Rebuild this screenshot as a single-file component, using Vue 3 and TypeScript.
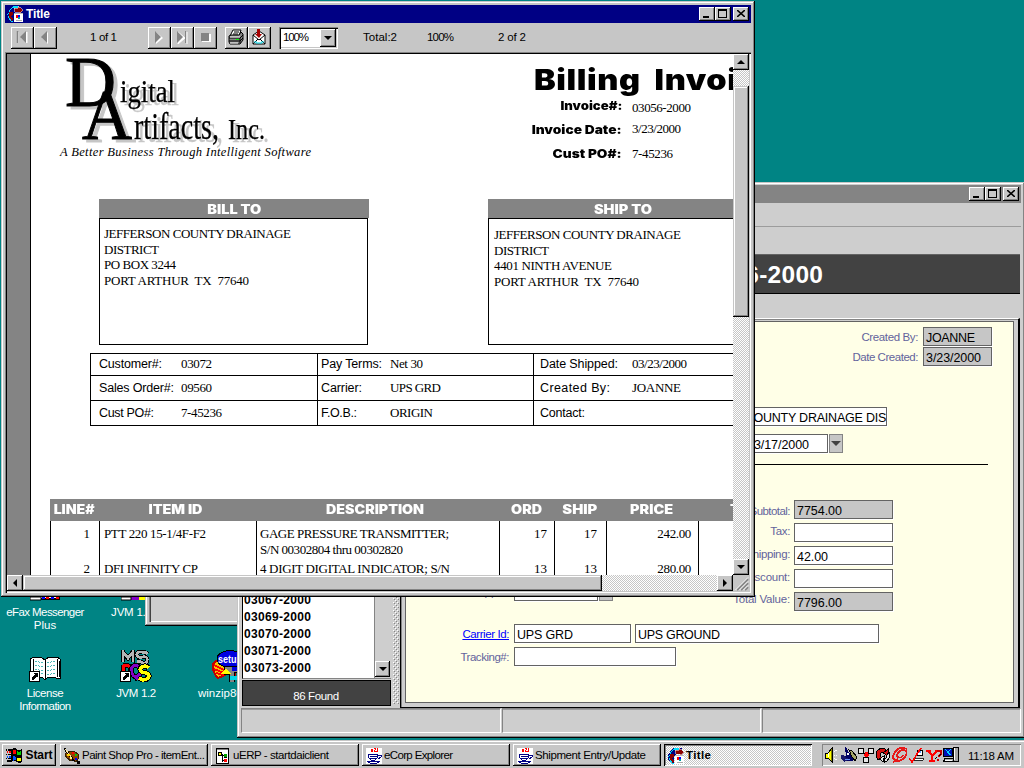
<script setup lang="ts">
import type { Directive } from 'vue'

interface Field { text: string; width: number }
interface InfoCell { label: Field; value: Field }
interface ItemRow { line: string; item: Field; description: Field[]; ordered: string; shipped: string; price: string }
interface Total { label: Field; value: string; width: number; readonly: boolean }
interface Task { icon: string; text: Field; active: boolean }

// Makes a line of text span the given width, by tracking or (with .wide) by widening its glyphs.
const vFit: Directive<HTMLElement, number> = {
  mounted(el, binding) {
    const length = (el.textContent ?? '').length
    if (!binding.value || length < 2) return
    const natural = el.getBoundingClientRect().width
    if (binding.modifiers.wide) el.style.transform = `scaleX(${binding.value / natural})`
    else el.style.letterSpacing = `${(binding.value - natural) / (length - 1)}px`
  },
}

const f = (text: string, width: number): Field => ({ text, width })

const invoiceMeta: InfoCell[] = [
  { label: f('Invoice#:', 62), value: f('03056-2000', 59) },
  { label: f('Invoice Date:', 90), value: f('3/23/2000', 49) },
  { label: f('Cust PO#:', 69), value: f('7-45236', 41) },
]

const parties = [
  {
    key: 'bill', title: f('BILL TO', 54),
    lines: [f('JEFFERSON COUNTY DRAINAGE', 187), f('DISTRICT', 55), f('PO BOX 3244', 72), f('PORT ARTHUR  TX  77640', 145)],
  },
  {
    key: 'ship', title: f('SHIP TO', 58),
    lines: [f('JEFFERSON COUNTY DRAINAGE', 187), f('DISTRICT', 55), f('4401 NINTH AVENUE', 118), f('PORT ARTHUR  TX  77640', 145)],
  },
]

const info: InfoCell[][] = [
  [
    { label: f('Customer#:', 63), value: f('03072', 31) },
    { label: f('Pay Terms:', 61), value: f('Net 30', 33) },
    { label: f('Date Shipped:', 78), value: f('03/23/2000', 55) },
  ],
  [
    { label: f('Sales Order#:', 75), value: f('09560', 31) },
    { label: f('Carrier:', 41), value: f('UPS GRD', 51) },
    { label: f('Created By:', 70), value: f('JOANNE', 49) },
  ],
  [
    { label: f('Cust PO#:', 55), value: f('7-45236', 41) },
    { label: f('F.O.B.:', 36), value: f('ORIGIN', 43) },
    { label: f('Contact:', 45), value: f('', 0) },
  ],
]

const itemHeads: Field[] = [
  f('LINE#', 41), f('ITEM ID', 54), f('DESCRIPTION', 98), f('ORD', 31), f('SHIP', 35), f('PRICE', 43), f('TOTAL', 48),
]

const items: ItemRow[] = [
  {
    line: '1', item: f('PTT 220 15-1/4F-F2', 102),
    description: [f('GAGE PRESSURE TRANSMITTER;', 189), f('S/N 00302804 thru 00302820', 143)],
    ordered: '17', shipped: '17', price: '242.00',
  },
  {
    line: '2', item: f('DFI INFINITY CP', 94),
    description: [f('4 DIGIT DIGITAL INDICATOR; S/N', 190)],
    ordered: '13', shipped: '13', price: '280.00',
  },
]

const shipments = ['03067-2000', '03069-2000', '03070-2000', '03071-2000', '03073-2000']

const totals: Total[] = [
  { label: f('Subtotal:', 41), value: '7754.00', width: 45, readonly: true },
  { label: f('Tax:', 20), value: '', width: 0, readonly: false },
  { label: f('Shipping:', 45), value: '42.00', width: 31, readonly: false },
  { label: f('Discount:', 46), value: '', width: 0, readonly: false },
  { label: f('Total Value:', 57), value: '7796.00', width: 45, readonly: true },
]

const tasks: Task[] = [
  { icon: 'palette', text: f('Paint Shop Pro - itemEnt...', 123), active: false },
  { icon: 'script', text: f('uERP - startdaiclient', 96), active: false },
  { icon: 'java', text: f('eCorp Explorer', 69), active: false },
  { icon: 'java', text: f('Shipment Entry/Update', 111), active: false },
  { icon: 'report', text: f('Title', 25), active: true },
]

const tray = ['speaker', 'wizard', 'nodes', 'cycle', 'swirl', 'check', 'yahoo', 'monitor']
</script>

<template>
  <div class="desktop">
    <svg class="defs" aria-hidden="true">
      <symbol id="report" viewBox="0 0 16 16">
        <path d="M5 0h9v6H8L6 8v8H4L0 11V7z" fill="#000084" />
        <path d="M0 9l2-2 1-3 3-3h5" fill="none" stroke="#00e0ff" stroke-width="1.200" />
        <path d="M7 2h4V0l5 4-4 4V6H8z" fill="#8c0000" stroke="#fff" stroke-width=".5" />
        <path d="M2 6h4v3L4 10l2 3-1 2-3-2z" fill="#8c0000" />
        <path d="M1 10l3 5h2" fill="none" stroke="#00e0ff" />
        <path d="M7 7h9v9H7z" fill="#fff" /><path d="M7 7h9" stroke="#bbb" />
        <path d="M9 9h2v3H9z" fill="#f00" /><path d="M11 9h2v2h-2z" fill="#00f" /><path d="M11 11h2v2h-2z" fill="#00a0a0" />
        <path d="M8.500 14.500h6" stroke="#aaa" />
      </symbol>
      <symbol id="palette" viewBox="0 0 16 16">
        <path d="M2 5l3-2 5 0 4 3 1 4-3 4-3-2-2 1-4-3-2-3z" fill="#944200" stroke="#312000" />
        <path d="M0 0l10 13" stroke="#000" stroke-width="2" /><path d="M1 1l7 9" stroke="#ffe7a5" />
        <path d="M3 6h3v2H3z" fill="#ffd600" /><path d="M8 4h2v2H8z" fill="#f00" /><path d="M11 6h2v2h-2z" fill="#0c0" /><path d="M11 10h2v2h-2z" fill="#00f" />
        <path d="M6 9h2v2H6z" fill="#ff8" /><path d="M13 13h2v1h-2v1h2v1h-3" fill="none" stroke="#000" />
      </symbol>
      <symbol id="script" viewBox="0 0 16 16">
        <path d="M1.500.500h12v15h-12z" fill="#fff" stroke="#000" /><path d="M2 1h11v1H2z" fill="#848484" />
        <path d="M3 4h4v4H3z" fill="#000" /><path d="M4 5h2v2H4z" fill="#ff0" /><path d="M7 6h1v8H7z" fill="#000" />
        <path d="M9 6h3v3H9z" fill="#00a000" /><path d="M9 11h3v3H9z" fill="#f00" /><path d="M7 7h2v1H7zM7 12h2v1H7zM9 9h3v1H9z" fill="#000" />
      </symbol>
      <symbol id="java" viewBox="0 0 16 16">
        <path d="M0 0h16v16H0z" fill="#fff" />
        <path d="M5 1l2 1-2 1 2 1M8 0l2 1-2 2 2 1M12 0l-1 2 1 1-2 1" fill="none" stroke="#f00" stroke-width="1.200" />
        <path d="M2 6h10l-1 4-2 2H5L3 10z" fill="#fff" stroke="#000084" />
        <path d="M12 7h3v2l-3 2M4 8h7M4 10h6" fill="none" stroke="#000084" />
        <path d="M1 13l3 2h7l3-2M3 13h9" fill="none" stroke="#000084" />
      </symbol>
      <symbol id="flag" viewBox="0 0 16 16">
        <path d="M5 2q3-2 5 0t5 0v12q-3 2-5 0t-5 0z" fill="#000" />
        <path d="M6.500 3q2-1 3 .5V7q-1-1-3 0z" fill="#f00" /><path d="M10.500 4q1 .8 3.500 0v3.500q-2 1-3.500 0z" fill="#00d000" />
        <path d="M6.500 9q2-1 3 .5V13q-1-1-3 0z" fill="#0050ff" /><path d="M10.500 10q1 .8 3.500 0v3q-2 1-3.500 0z" fill="#ff0" />
        <path d="M0 3h1M2 3h3M0 7h1M2 7h3M0 11h1M2 11h3M1 13h4" stroke="#000" stroke-width="1.500" />
        <path d="M1 5h1M3 5h2" stroke="#f00" stroke-width="2" /><path d="M1 9h1M3 9h2" stroke="#0050ff" stroke-width="2" />
      </symbol>
      <symbol id="speaker" viewBox="0 0 16 16">
        <path d="M1 6h3l4-5v14l-4-4H1z" fill="#ff0" stroke="#000" /><path d="M7 2v12" stroke="#848400" />
        <path d="M4 6v4" stroke="#fff" /><path d="M10 5l3-2M10 8h4M10 11l3 2" stroke="#fff" stroke-dasharray="1 1" />
      </symbol>
      <symbol id="wizard" viewBox="0 0 16 16">
        <path d="M4 0l2 2 4 7 2 2v3H2v-3l3-2z" fill="#000063" /><path d="M0 8h3l2 3 4 1-6 3-3-3z" fill="#18186b" />
        <path d="M8 3l3 1 5 6-2 4-3-4z" fill="#a5a56b" stroke="#000" /><path d="M6 6h2v2H6z" fill="#fff" /><path d="M4 12h5v1H4z" fill="#6b94ff" />
      </symbol>
      <symbol id="nodes" viewBox="0 0 16 16">
        <path d="M.5 1.500h5v5h-5zM10.500 1.500h5v5h-5zM5.500 10.500h5v5h-5z" fill="#e7e7e7" stroke="#000" />
        <path d="M5 5l3 3 3-3M8 8v3" stroke="#000" fill="none" /><path d="M7 5h3v2h1v2h-1v1H7V9H6V7h1z" fill="#f00" />
      </symbol>
      <symbol id="cycle" viewBox="0 0 16 16">
        <path d="M3 13L1 9l1-5 4-3h3l2 2-1 3-3-1-2 2v2l2 2z" fill="#d61010" stroke="#000" />
        <path d="M8 6l5 3V2z" fill="#d61010" stroke="#000" />
        <path d="M14 5l1 5-3 4-4 1v-3l3-1 1-3zM9 9v6l-5-3z" fill="#e7e7e7" stroke="#000" />
      </symbol>
      <symbol id="swirl" viewBox="0 0 16 16">
        <path d="M15 2Q7-1 3 5t-1 7q4 4 9 0t3-8q-3-3-7 1T6 10q3 2 5-2" fill="none" stroke="#e71818" stroke-width="1.800" />
        <path d="M1 15l5-3" stroke="#e71818" stroke-width="2" />
      </symbol>
      <symbol id="check" viewBox="0 0 16 16">
        <path d="M8 3h5v5H8z" fill="#fff" stroke="#000" /><path d="M9 4h3v2H9z" fill="#5aa5ff" /><path d="M5 11h9v2H5z" fill="#fff" stroke="#000" stroke-width=".8" />
        <path d="M0 11l3 4L12 1" fill="none" stroke="#f00" stroke-width="1.600" />
      </symbol>
      <symbol id="yahoo" viewBox="0 0 16 16">
        <path d="M0 3h5v1L6 7l3-3V3h3v1L7 9v4h2v2H3v-2h2V9L1 5H0z" fill="#f00" /><path d="M11 4h4v3l-3 3M11 13h2" fill="none" stroke="#c00" stroke-width="1.600" />
        <path d="M9 12l2-2M13 9l2-2" stroke="#000" />
      </symbol>
      <symbol id="monitor" viewBox="0 0 16 16">
        <path d="M.5 1.500h9v8h-9zM10.500.500h5v14h-5zM2 11.500h8v3H.500z" fill="#a5a5a5" stroke="#000" /><path d="M1 2h8v7H1z" fill="#0010b5" />
        <path d="M2 2l3 3 3-3M4 5l4 3" fill="none" stroke="#00d6ff" /><path d="M11.500 1v12" stroke="#fff" /><path d="M2 13h7" stroke="#fff" />
      </symbol>
      <symbol id="msdos" viewBox="0 0 32 32">
        <g fill="none" stroke-linejoin="miter">
          <path d="M3 12V2l5 6 5-6v10M28 4q-2-2-7-2t-4 3 6 2 4 4-6 1l-4-1" stroke="#000" stroke-width="4.500" />
          <path d="M3 12V2l5 6 5-6v10M28 4q-2-2-7-2t-4 3 6 2 4 4-6 1l-4-1" stroke="#b5b5b5" stroke-width="2.800" />
          <path d="M3 15v14h3q5-1 4-12-2-2-7-2" stroke="#000" stroke-width="5" /><path d="M3 15v14h3q5-1 4-12-2-2-7-2" stroke="#f00" stroke-width="3" />
          <path d="M15 15q-5 2-3 8t7 2-1-9zM15 25l3 5" stroke="#000" stroke-width="5" /><path d="M15 15q-5 2-3 8t7 2-1-9zM15 25l3 5" stroke="#8400c6" stroke-width="3" />
          <path d="M29 18q-3-3-7-1t0 5q7 1 7 4t-6 4l-4-2" stroke="#000" stroke-width="5.500" /><path d="M29 18q-3-3-7-1t0 5q7 1 7 4t-6 4l-4-2" stroke="#ff0" stroke-width="3.500" />
        </g>
      </symbol>
      <symbol id="shortcut" viewBox="0 0 11 11">
        <path d="M.5.500h10v10H.500z" fill="#fff" stroke="#000" /><path d="M4 2h5v5L7.500 5.500 5 8v1H3V7l2.500-3.500z" fill="#000" />
      </symbol>
      <symbol id="book" viewBox="0 0 32 26">
        <path d="M1 3l4-2h7l4 3 4-3h8l3 2v19h-4l-8-1-3 3-3-3-9 1H1z" fill="#fff" stroke="#000" />
        <path d="M4 3v17M16 4v19M28 3v18M30 5v16" stroke="#000" />
        <path d="M6 5l8 2M6 9l8 2M6 13l8 2M6 17l8 1M18 7l8-2M18 11l8-2M18 15l8-2M18 19l8-2" stroke="#4ab5b5" stroke-dasharray="2 1" />
      </symbol>
      <symbol id="setup" viewBox="0 0 32 32">
        <path d="M1 14q4-6 13-2l9 6v7l-8-1-9 4q-6-6-5-14z" fill="#f7c600" stroke="#c00000" stroke-width="2" />
        <path d="M2 15l10 5M2 19l10 4M4 23l8 2" stroke="#f00" stroke-width="2" />
        <ellipse cx="18" cy="9" rx="13" ry="8.500" fill="#0000e0" stroke="#000" />
        <path d="M12 16h18v6H22v10h-5v-8h-5z" fill="#848484" stroke="#000" /><path d="M14 18l5 6H9z" fill="#ff0" /><path d="M20 17h10v4H20z" fill="#0000e0" />
        <path d="M18 26h8v4h-8z" fill="#00d6e7" />
        <text x="6" y="13" textLength="24" lengthAdjust="spacingAndGlyphs" class="setup-text">setup</text>
      </symbol>
    </svg>

    <div class="shortcuts">
      <div class="shortcut">
        <div class="art short"><svg width="30" height="5"><path d="M10 0h20v3H10z" fill="#000" /><path d="M11 0h18v1H11z" fill="#fff" /><path d="M12 0h3v2h-3zM21 0h3v2h-3z" fill="#00f" /><path d="M16 0h3v2h-3zM26 0h3v2h-3z" fill="#f00" /><path d="M0 0h11v3H0z" fill="#fff" stroke="#000" /></svg></div>
        <span v-fit="78">eFax Messenger</span><span>Plus</span>
      </div>
      <div class="shortcut">
        <div class="art short"><svg width="31" height="5"><path d="M10 0h8v3h-8z" fill="#8400c6" /><path d="M18 0h12v3H18z" fill="#ff0" /><path d="M0 0h10v3H0z" fill="#fff" stroke="#000" /></svg></div>
        <span v-fit="50">JVM 1.1.8</span>
      </div>
      <div></div>
      <div class="shortcut">
        <div class="art"><svg width="32" height="26"><use href="#book" /></svg><svg class="arrow" width="11" height="11"><use href="#shortcut" /></svg></div>
        <span v-fit="37">License</span><span v-fit="52">Information</span>
      </div>
      <div class="shortcut">
        <div class="art"><svg width="32" height="32"><use href="#msdos" /></svg><svg class="arrow" width="11" height="11"><use href="#shortcut" /></svg></div>
        <span v-fit="40">JVM 1.2</span>
      </div>
      <div class="shortcut">
        <div class="art"><svg width="32" height="32"><use href="#setup" /></svg></div>
        <span v-fit="60">winzip80.ex</span>
      </div>
    </div>

    <div class="window stub"><div class="stub-face"></div></div>

    <section class="window entry">
      <div class="titlebar idle">
        <div class="controls">
          <button class="ctl"><i class="min"></i></button><button class="ctl"><i class="max"></i></button>
          <button class="ctl close"><svg width="8" height="7"><path d="M0 0l8 7M8 0L0 7" stroke="#000" stroke-width="1.600" /></svg></button>
        </div>
      </div>
      <div class="menubar"></div>
      <div class="toolstrip"></div>
      <div class="banner"><span v-fit="263">Shipment: 03056-2000</span></div>
      <div class="body">
        <aside class="side">
          <div class="list">
            <ul><li v-for="s in shipments" :key="s"><span v-fit="67">{{ s }}</span></li></ul>
            <div class="list-bar"><button class="bevel sq"><i class="tri down"></i></button></div>
          </div>
          <div class="found"><span v-fit="46">86 Found</span></div>
        </aside>
        <div class="splitter">
          <svg width="7" height="410">
            <pattern id="bumps" width="4" height="4" patternUnits="userSpaceOnUse">
              <path d="M0 0h1v1H0zM2 2h1v1H2z" fill="#fff" /><path d="M1 1h1v1H1zM3 3h1v1H3z" fill="#848484" />
            </pattern>
            <rect width="7" height="410" fill="url(#bumps)" />
          </svg>
        </div>
        <div class="form-frame">
          <div class="form">
            <div class="row end"><label v-fit="57">Created By:</label><div class="input ro w69"><span v-fit="49">JOANNE</span></div></div>
            <div class="row end second"><label v-fit="66">Date Created:</label><div class="input ro w69"><span v-fit="55">3/23/2000</span></div></div>
            <div class="row customer"><div class="input"><span v-fit="253">JEFFERSON COUNTY DRAINAGE DISTRICT</span></div></div>
            <div class="row ordered"><div class="input"><span v-fit="62">03/17/2000</span></div><div class="drop"><i></i></div></div>
            <hr />
            <div class="amounts">
              <div class="row shipped"><label>Shipped:</label><div class="input bold"><span v-fit="68">03/23/2000</span></div><div class="drop"><i></i></div></div>
              <div class="totals">
                <div v-for="t in totals" :key="t.label.text" class="row">
                  <label v-fit="t.label.width">{{ t.label.text }}</label>
                  <div class="input" :class="{ ro: t.readonly }"><span v-fit="t.width">{{ t.value }}</span></div>
                </div>
              </div>
            </div>
            <div class="row carrier"><label class="link"><span v-fit="47">Carrier Id:</span></label><div class="input w117"><span v-fit="56">UPS GRD</span></div><div class="input w244"><span v-fit="82">UPS GROUND</span></div></div>
            <div class="row tracking"><label><span v-fit="49">Tracking#:</span></label><div class="input w162"></div></div>
          </div>
        </div>
      </div>
      <div class="status"><div></div><div></div><div></div></div>
    </section>

    <section class="window report">
      <div class="titlebar">
        <svg class="ticon" width="16" height="16"><use href="#report" /></svg><b v-fit="24">Title</b>
        <div class="controls">
          <button class="ctl"><i class="min"></i></button><button class="ctl"><i class="max"></i></button>
          <button class="ctl close"><svg width="8" height="7"><path d="M0 0l8 7M8 0L0 7" stroke="#000" stroke-width="1.600" /></svg></button>
        </div>
      </div>
      <div class="toolbar">
        <button class="bevel tb"><svg width="12" height="14"><path d="M2 2v11M11 2v11L5 7.500z" fill="#fff" stroke="#fff" /><path d="M1.500 1v12" stroke="#848484" stroke-width="1.500" /><path d="M10 1v12L4 7z" fill="#848484" /></svg></button>
        <button class="bevel tb"><svg width="12" height="14"><path d="M9 2v12L3 8z" fill="#fff" /><path d="M8 1v12L2 7z" fill="#848484" /></svg></button>
        <span class="pages"><span v-fit="27">1 of 1</span></span>
        <button class="bevel tb"><svg width="12" height="14"><path d="M3 2v12l7-6z" fill="#fff" /><path d="M2 1v12l6-6z" fill="#848484" /></svg></button>
        <button class="bevel tb"><svg width="12" height="14"><path d="M2 2v12l7-6zM11 2v12" fill="#fff" stroke="#fff" /><path d="M1 1v12l6-6zM9 1h1v12H9z" fill="#848484" /></svg></button>
        <button class="bevel tb"><svg width="12" height="14"><path d="M3 4h9v8H3z" fill="#fff" /><path d="M2 3h8v8H2z" fill="#848484" /></svg></button>
        <button class="bevel tb print"><svg width="16" height="16"><path d="M5 1h8l-2 6H2z" fill="#fff" stroke="#000" /><path d="M6 3h5M5 5h5" stroke="#000" /><path d="M1 7l2-1h8l2-3 2 2v6l-3 4H2l-1-2z" fill="#848484" stroke="#000" /><path d="M1 9h11l3-3M1 12h11l3-3M12 9v5" fill="none" stroke="#000" /><path d="M2 8h10M2 14h8" stroke="#fff" /><path d="M8 10h3v1H8z" fill="#0f0" /></svg></button>
        <button class="bevel tb"><svg width="16" height="16"><path d="M2 6l6-4 6 4v9H2z" fill="#fff" stroke="#000" /><path d="M2 6l6 5 6-5M2 15l5-5M14 15l-5-5" fill="none" stroke="#000" /><path d="M3 13h3M10 13h3M5 14h6" stroke="#00d6e7" /><path d="M6 0h3v5h2L8 9 4 5h2z" fill="#a50000" /></svg></button>
        <div class="combo"><span v-fit="26">100%</span><button class="bevel"><i class="tri down"></i></button></div>
        <span class="t1"><span v-fit="34">Total:2</span></span><span class="t2"><span v-fit="27">100%</span></span><span v-fit="28">2 of 2</span>
      </div>
      <div class="viewport">
        <div class="gutter"></div>
        <div class="page">
          <header class="head">
            <svg class="logo" width="262" height="108" viewBox="57 54 262 108">
              <g class="ink">
                <text class="cap" x="65" y="106" font-size="72" textLength="51" lengthAdjust="spacingAndGlyphs">D</text>
                <text class="cap" x="82" y="139" font-size="71" textLength="50" lengthAdjust="spacingAndGlyphs">A</text>
                <text x="120" y="102" font-size="31" textLength="55" lengthAdjust="spacingAndGlyphs">igital</text>
                <text x="134" y="139" font-size="37" textLength="85" lengthAdjust="spacingAndGlyphs">rtifacts,</text>
                <text x="228" y="139" font-size="29" textLength="37" lengthAdjust="spacingAndGlyphs">Inc.</text>
              </g>
              <text class="tag" x="60" y="156" font-size="12.500" textLength="251">A Better Business Through Intelligent Software</text>
            </svg>
            <div class="invoice">
              <h1><span v-fit.wide="244">Billing Invoice</span></h1>
              <div v-for="m in invoiceMeta" :key="m.label.text" class="meta">
                <div class="meta-label"><b v-fit.wide="m.label.width">{{ m.label.text }}</b></div>
                <span v-fit="m.value.width">{{ m.value.text }}</span>
              </div>
            </div>
          </header>
          <div class="parties">
            <div v-for="p in parties" :key="p.key" class="party" :class="p.key">
              <h2><span v-fit.wide="p.title.width">{{ p.title.text }}</span></h2>
              <div class="address"><div v-for="l in p.lines" :key="l.text"><span v-fit="l.width">{{ l.text }}</span></div></div>
            </div>
          </div>
          <div class="info">
            <div v-for="(row, i) in info" :key="i" class="info-row">
              <div v-for="c in row" :key="c.label.text" class="info-cell">
                <div class="info-label"><span v-fit="c.label.width">{{ c.label.text }}</span></div><span v-fit="c.value.width">{{ c.value.text }}</span>
              </div>
            </div>
          </div>
          <div class="items">
            <div class="items-head"><div v-for="h in itemHeads" :key="h.text"><span v-fit.wide="h.width">{{ h.text }}</span></div></div>
            <div v-for="r in items" :key="r.line" class="items-row">
              <div class="num">{{ r.line }}</div>
              <div><span v-fit="r.item.width">{{ r.item.text }}</span></div>
              <div><p v-for="d in r.description" :key="d.text"><span v-fit="d.width">{{ d.text }}</span></p></div>
              <div class="num">{{ r.ordered }}</div><div class="num">{{ r.shipped }}</div><div class="num"><span v-fit="34">{{ r.price }}</span></div><div></div>
            </div>
          </div>
        </div>
        <div class="vbar">
          <button class="bevel sq"><i class="tri up"></i></button><div class="thumb"></div><button class="bevel sq"><i class="tri down"></i></button>
        </div>
        <div class="hbar">
          <button class="bevel sq"><i class="tri left"></i></button><div class="thumb"></div><button class="bevel sq"><i class="tri right"></i></button>
        </div>
        <svg class="grip" width="16" height="16"><path d="M4 15L15 4M8 15l7-7M12 15l3-3" stroke="#848484" stroke-width="1.800" /><path d="M2.500 15L15 2.500M6.500 15L15 6.500M10.500 15l4.500-4.500" stroke="#fff" /></svg>
      </div>
    </section>

    <footer class="taskbar">
      <button class="bevel start"><svg width="17" height="17"><use href="#flag" /></svg><b v-fit="27">Start</b></button>
      <div class="tasks">
        <button v-for="t in tasks" :key="t.text.text" class="bevel task" :class="{ active: t.active }">
          <svg width="16" height="16"><use :href="'#' + t.icon" /></svg><span v-fit="t.text.width">{{ t.text.text }}</span>
        </button>
      </div>
      <div class="tray"><svg v-for="i in tray" :key="i" width="16" height="16"><use :href="'#' + i" /></svg><time><span v-fit="46">11:18 AM</span></time></div>
    </footer>
  </div>
</template>

<style>
html, body { margin: 0; overflow: hidden; background: #008484; }
</style>

<style scoped>
* { box-sizing: border-box; }
.desktop { position: relative; width: 1024px; height: 768px; overflow: hidden; background: #008484; font: 12px/13px "Liberation Sans", Arial, sans-serif; color: #000; white-space: pre; }
.desktop svg { flex: none; display: block; }
.desktop .defs { position: absolute; width: 0; height: 0; }
span, b, label { display: inline-block; flex: none; white-space: pre; }
button { padding: 0; border: 0; background: #c6c6c6; font: inherit; color: #000; display: flex; align-items: center; justify-content: center; flex: none; }
h1, h2, p, ul { margin: 0; padding: 0; list-style: none; }
symbol, use { shape-rendering: crispEdges; }
.bevel { background: #c6c6c6; box-shadow: inset -1px -1px #000, inset 1px 1px #fff, inset -2px -2px #848484; }
.sq { width: 16px; height: 16px; }

.shortcuts { position: absolute; left: 0; top: 597px; display: grid; grid-template-columns: 90px 92px 92px; grid-template-rows: 49px 70px; }
.shortcut { display: flex; flex-direction: column; align-items: center; color: #fff; font-size: 11.500px; }
.shortcut .art { position: relative; height: 36px; margin-bottom: 5px; display: flex; align-items: flex-end; }
.shortcut .art.short { height: 5px; margin-bottom: 4px; }
.arrow { position: absolute; left: 0; bottom: 0; }
.setup-text { font: bold 11px "Liberation Sans", Arial, sans-serif; fill: #fff; }

.window { position: absolute; padding: 4px; background: #c6c6c6; box-shadow: inset -1px -1px #000, inset 1px 1px #c6c6c6, inset -2px -2px #848484, inset 2px 2px #fff; }
.titlebar { height: 18px; background: #000084; color: #fff; display: flex; align-items: center; padding: 0 2px; }
.titlebar.idle { background: #848484; }
.titlebar b { margin-left: 3px; line-height: 18px; }
.controls { display: flex; margin-left: auto; }
.ctl { width: 16px; height: 14px; box-shadow: inset -1px -1px #000, inset 1px 1px #fff, inset -2px -2px #848484; }
.ctl.close { margin-left: 2px; }
.min { width: 6px; height: 2px; background: #000; margin: 6px 2px 0 0; }
.max { width: 9px; height: 9px; border: 1px solid #000; border-top-width: 2px; margin: 0 1px 1px 0; }
.ctl svg { margin: 0 1px 1px 0; }
.tri { width: 0; height: 0; border: 4px solid transparent; }
.tri.down { border-top-color: #000; border-bottom: 0; }
.tri.up { border-bottom-color: #000; border-top: 0; }
.tri.left { border-right-color: #000; border-left: 0; }
.tri.right { border-left-color: #000; border-right: 0; }

.stub { left: 145px; top: 500px; width: 200px; height: 126px; }
.stub-face { height: 100%; background: #cecece; box-shadow: inset 1px 1px #848484, inset 2px 2px #424242, inset -1px -1px #fff; }

.entry { left: 237px; top: 182px; width: 788px; height: 556px; background: #cecece; display: flex; flex-direction: column; }
.entry .titlebar { margin-top: -1px; flex: none; }
.menubar { height: 24px; border-bottom: 1px solid #9c9c9c; flex: none; }
.toolstrip { height: 27px; flex: none; }
.banner { height: 40px; flex: none; margin-right: 1px; padding-left: 319px; background: #424242; border-top: 1px solid #636363; border-bottom: 1px solid #000; color: #fff; font: bold 24.500px/39px "Liberation Sans", Arial, sans-serif; }
.body { flex: 1; min-height: 0; display: flex; }
.side { width: 152px; padding-left: 1px; display: flex; flex-direction: column; }
.list { height: 388px; display: flex; background: #fff; border-left: 1px solid #000; border-bottom: 1px solid #848484; }
.list ul { flex: 1; align-self: flex-end; font-weight: bold; line-height: 17px; padding: 0 0 1px 1px; }
.list-bar { width: 17px; background: #cecece; border-left: 1px solid #848484; display: flex; align-items: flex-end; padding-bottom: 1px; }
.list-bar .sq { width: 15px; }
.found { height: 26px; margin-top: 1px; background: #424242; border: 1px solid #000; color: #fff; text-align: center; line-height: 31px; padding-right: 1px; font-size: 11.500px; }
.splitter { width: 6px; height: 410px; margin: 0 1px 0 2px; overflow: hidden; flex: none; }
.form-frame { flex: 1; margin: 24px 1px 0 0; padding: 2px 4px 5px; height: 390px; background: #cecece; border: 1px solid #000; border-top-color: #fff; border-right-width: 2px; box-shadow: inset 1px 1px #848484; }
.form { height: 382px; width: 609px; border: 1px solid #636363; background: #ffffe7; padding: 5px 0 0; color: #63639c; overflow: hidden; }
.row { display: flex; height: 19px; }
.row label { font-size: 11.500px; line-height: 21px; margin-right: 5px; }
.row.end { justify-content: flex-end; padding-right: 21px; margin-top: 0; }
.row.second { margin-top: 1px; }
.input { height: 19px; background: #fff; border: 1px solid #636363; color: #000; overflow: hidden; padding-left: 2px; line-height: 20px; font-size: 12.500px; flex: none; box-shadow: 1px 1px #fff; }
.input.ro { background: #c6c6c6; }
.input.bold { font-weight: bold; width: 84px; }
.w69 { width: 69px; } .w117 { width: 117px; } .w162 { width: 162px; } .w244 { width: 244px; margin-left: 4px; }
.drop { width: 14px; height: 19px; margin-left: 1px; background: #c6c6c6; border: 1px solid #848484; display: flex; align-items: center; justify-content: center; flex: none; }
.drop i { border: 5px solid transparent; border-top-color: #424242; border-bottom: 0; }
.customer { margin-top: 41px; padding-left: 257px; }
.customer .input { width: 224px; padding-left: 5px; }
.ordered { margin-top: 8px; padding-left: 336px; }
.ordered .input { width: 86px; padding-left: 4px; }
hr { border: 0; height: 1px; background: #000; margin: 11px 25px 0 6px; }
.amounts { display: flex; margin-top: 35px; height: 111px; }
.shipped { margin-top: 82px; width: 278px; padding-left: 62px; }
.shipped label { width: 41px; }
.totals { width: 209px; display: flex; flex-direction: column; gap: 4px; }
.totals .row { justify-content: flex-end; width: 209px; }
.totals .input { width: 99px; }
.totals .row label { line-height: 22px; margin-right: 4px; }
.totals .row:nth-child(3) label, .totals .row:nth-child(2) label { line-height: 17px; }
.totals .row:nth-child(4) label { line-height: 16px; }
.totals .row:last-child label { line-height: 14px; }
.carrier { margin-top: 13px; }
.carrier label, .tracking label { width: 103px; text-align: right; }
.tracking { margin-top: 4px; }
.link span { color: #00f; text-decoration: underline; }
.status { display: grid; grid-template-columns: 260px 259px 1fr; gap: 1px; height: 25px; flex: none; margin: 2px 0 1px; }
.status div { border: 1px solid #848484; border-right-color: #fff; border-bottom-color: #fff; box-shadow: inset 0 1px #9c9c9c; }

.report { left: 1px; top: 1px; width: 754px; height: 596px; }
.toolbar { height: 29px; padding-left: 6px; display: flex; align-items: center; font-size: 11.500px; }
.tb { width: 23px; height: 22px; }
.tb svg { margin: 0 1px 1px 0; }
.pages { width: 91px; padding-left: 33px; }
.print { margin-left: 8px; }
.combo { width: 59px; height: 22px; margin-left: 8px; padding: 2px; background: #fff; box-shadow: inset 1px 1px #848484, inset 2px 2px #000, inset -1px -1px #fff, inset -2px -2px #c6c6c6; display: flex; align-items: center; justify-content: space-between; padding-left: 4px; }
.combo .bevel { width: 16px; height: 18px; }
.t1 { width: 64px; margin-left: 25px; } .t2 { width: 71px; }
.viewport { width: 746px; height: 541px; padding: 2px; background: #c6c6c6; box-shadow: inset 1px 1px #848484, inset 2px 2px #000, inset -1px -1px #fff; display: grid; grid-template-columns: 24px 702px 16px; grid-template-rows: 521px 16px; }
.gutter { background: #848484; border-right: 1px solid #000; }
.page { background: #fff; overflow: hidden; font: 13px/16px "Liberation Serif", "Times New Roman", serif; }
.vbar, .hbar { display: flex; background: repeating-conic-gradient(#fff 0 25%, #c6c6c6 0 50%) 0 0 / 2px 2px; }
.vbar { flex-direction: column; justify-content: space-between; }
.vbar .thumb { height: 231px; margin-bottom: 226px; }
.hbar { grid-column: 1 / 3; }
.hbar .thumb { width: 579px; margin-right: auto; }
.thumb { background: #c6c6c6; box-shadow: inset -1px -1px #000, inset 1px 1px #c6c6c6, inset -2px -2px #848484, inset 2px 2px #fff; flex: none; }

.head { display: flex; height: 145px; }
.logo { margin-left: 26px; }
.logo text { font-family: "Liberation Serif", "Times New Roman", serif; }
.ink { filter: drop-shadow(4px 3px 0 #c6c6c6); stroke: #000; stroke-width: .25px; }
.ink .cap { stroke-width: 1px; }
.logo .tag { font-style: italic; }
.invoice { margin-left: 213px; }
h1 { height: 39.500px; font: 900 28px/53px Inter, "Arial Black", sans-serif; width: 260px; margin-left: 2px; }
h1 span { transform-origin: left; letter-spacing: .5px; word-spacing: 6px; }
.meta { display: flex; height: 24px; align-items: center; }
.meta-label { width: 90px; text-align: right; margin-right: 10px; font: 900 12px/24px Inter, "Arial Black", sans-serif; }
h1 + .meta, .meta { margin-left: 0; }
.meta-label b { font-weight: 900; transform-origin: right; }
.meta:nth-child(2) > span { margin-top: 4px; }
.meta:nth-child(3) > span { margin-top: -2px; }
.parties { display: flex; gap: 119px; margin-left: 68px; height: 146px; }
.party { width: 270px; flex: none; }
h2 { height: 19px; background: #848484; color: #fff; text-align: center; font: 900 12.500px/21px Inter, "Arial Black", sans-serif; }
.address { width: 269px; height: 127px; border: 1px solid #000; padding: 7px 4px; line-height: 15.600px; }
.address div { height: 15.600px; }
.ship .address { padding: 8px 4px 0 5px; }
.info { margin: 8px 0 0 59px; width: 700px; border-top: 1px solid #000; }
.info-row { display: grid; grid-template-columns: 227px 216px 250px; height: 25px; border-bottom: 1px solid #000; }
.info-row:first-child { height: 22px; }
.info-row:first-child .info-cell { padding-bottom: 1px; }
.info-cell { border-left: 1px solid #000; display: flex; align-items: center; padding-left: 8px; }
.info-label { width: 82px; font-family: "Liberation Sans", Arial, sans-serif; font-size: 12.500px; }
.info-cell:nth-child(2) { padding-left: 3px; } .info-cell:nth-child(2) .info-label { width: 69px; }
.info-cell:nth-child(3) { padding-left: 6px; } .info-cell:nth-child(3) .info-label { width: 92px; }
.items { margin: 73px 0 0 19px; width: 760px; }
.items-head, .items-row { display: grid; grid-template-columns: 49px 157px 243px 55px 52px 92px 112px; }
.items-head { height: 22px; background: #848484; color: #fff; text-align: center; font: 900 12.500px/22px Inter, "Arial Black", sans-serif; }
.items-head div:nth-child(2), .items-head div:nth-child(3) { padding-right: 5px; }
.items-row { height: 35px; }
.items-row > div { border-left: 1px solid #000; padding: 5px 0 0 4px; }
.items-row > div:nth-child(3) { padding-left: 3px; }
.items-row > .num { text-align: right; padding-right: 9px; }
.items-row > .num:nth-child(4), .items-row > .num:nth-child(6) { padding-right: 7px; }

.taskbar { position: absolute; left: 0; right: 0; bottom: 0; height: 28px; background: #c6c6c6; box-shadow: inset 0 1px #c6c6c6, inset 0 2px #fff; display: flex; padding: 4px 3px 2px 2px; }
.start { width: 54px; gap: 3px; padding: 1px 0 0; }
.tasks { display: flex; gap: 3px; margin-left: 4px; }
.task { width: 148px; justify-content: flex-start; padding: 1px 0 0 4px; gap: 2px; font-size: 11.500px; }
.task.active { background: repeating-conic-gradient(#fff 0 25%, #c6c6c6 0 50%) 0 0 / 2px 2px; box-shadow: inset 1px 1px #000, inset -1px -1px #fff, inset 2px 2px #848484; font-weight: bold; }
.tray { width: 199px; margin-left: auto; display: flex; align-items: center; padding-left: 2px; box-shadow: inset 1px 1px #848484, inset -1px -1px #fff; font-size: 11.500px; }
.tray svg { margin-right: 1px; }
.tray time { margin: 2px 0 0 8px; }
</style>
